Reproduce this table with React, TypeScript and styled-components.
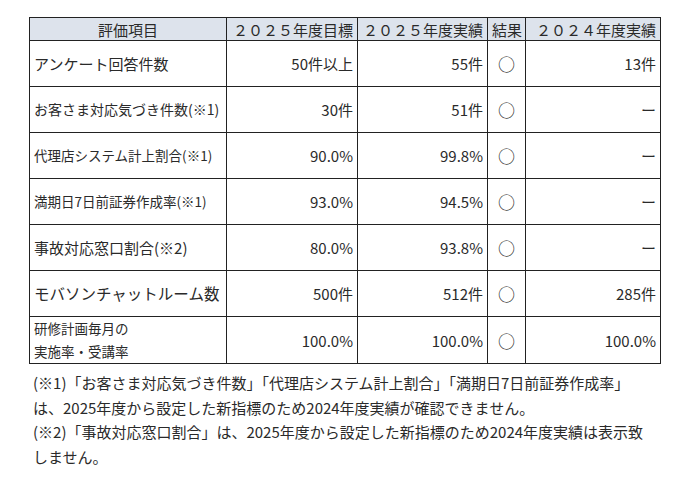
import styled, { createGlobalStyle } from 'styled-components';

const GlobalStyle = createGlobalStyle`
  body {
    margin: 0;
    background: #ffffff;
    font-family: "Noto Sans CJK JP", "Noto Sans", sans-serif;
    color: #2a2a2a;
  }
`;

const Page = styled.div`
  padding: 17px 0 0 29px;
  width: 640px;
`;

const Table = styled.table`
  border-collapse: collapse;
  table-layout: fixed;
  width: 631px;
`;

const HeadCell = styled.th<{ $align?: string }>`
  background: #dde3ec;
  border: 1px solid #222;
  height: 22px;
  padding: 0 4px;
  font-size: 15px;
  font-weight: normal;
  line-height: 21px;
  text-align: ${p => p.$align || 'center'};
  white-space: nowrap;
  overflow: hidden;
`;

const LabelCell = styled.td<{ $size: number }>`
  border: 1px solid #222;
  height: 45px;
  padding: 0 4px;
  font-size: ${p => p.$size}px;
  line-height: 23px;
  white-space: nowrap;
  text-align: left;
`;

const ValueCell = styled.td`
  border: 1px solid #222;
  padding: 0 4px;
  font-size: 15px;
  text-align: right;
  white-space: nowrap;
`;

const ResultCell = styled.td`
  border: 1px solid #222;
  padding: 0;
  font-size: 17px;
  text-align: center;
`;

const Notes = styled.div`
  margin-top: 7px;
  padding-left: 4px;
  font-size: 15px;
  line-height: 24.5px;
  white-space: nowrap;
`;

type Row = {
  label: React.ReactNode;
  size: number;
  target: string;
  actual: string;
  prev: string;
};

const rows: Row[] = [
  { label: 'アンケート回答件数', size: 15, target: '50件以上', actual: '55件', prev: '13件' },
  { label: 'お客さま対応気づき件数(※1)', size: 14, target: '30件', actual: '51件', prev: 'ー' },
  { label: '代理店システム計上割合(※1)', size: 13.5, target: '90.0%', actual: '99.8%', prev: 'ー' },
  { label: '満期日7日前証券作成率(※1)', size: 13.5, target: '93.0%', actual: '94.5%', prev: 'ー' },
  { label: '事故対応窓口割合(※2)', size: 15, target: '80.0%', actual: '93.8%', prev: 'ー' },
  { label: 'モバソンチャットルーム数', size: 15.5, target: '500件', actual: '512件', prev: '285件' },
  {
    label: (
      <>
        研修計画毎月の
        <br />
        実施率・受講率
      </>
    ),
    size: 13.5,
    target: '100.0%',
    actual: '100.0%',
    prev: '100.0%',
  },
];

export default function App() {
  return (
    <>
      <GlobalStyle />
      <Page>
        <Table>
          <colgroup>
            <col style={{ width: 197 }} />
            <col style={{ width: 131 }} />
            <col style={{ width: 130 }} />
            <col style={{ width: 38 }} />
            <col style={{ width: 135 }} />
          </colgroup>
          <thead>
            <tr>
              <HeadCell>評価項目</HeadCell>
              <HeadCell $align="right">２０２５年度目標</HeadCell>
              <HeadCell $align="right">２０２５年度実績</HeadCell>
              <HeadCell>結果</HeadCell>
              <HeadCell $align="right">２０２４年度実績</HeadCell>
            </tr>
          </thead>
          <tbody>
            {rows.map((r, i) => (
              <tr key={i}>
                <LabelCell $size={r.size}>{r.label}</LabelCell>
                <ValueCell>{r.target}</ValueCell>
                <ValueCell>{r.actual}</ValueCell>
                <ResultCell>○</ResultCell>
                <ValueCell>{r.prev}</ValueCell>
              </tr>
            ))}
          </tbody>
        </Table>
        <Notes>
          (※1)「お客さま対応気づき件数」「代理店システム計上割合」「満期日7日前証券作成率」
          <br />
          は、2025年度から設定した新指標のため2024年度実績が確認できません。
          <br />
          (※2)「事故対応窓口割合」は、2025年度から設定した新指標のため2024年度実績は表示致
          <br />
          しません。
        </Notes>
      </Page>
    </>
  );
}
